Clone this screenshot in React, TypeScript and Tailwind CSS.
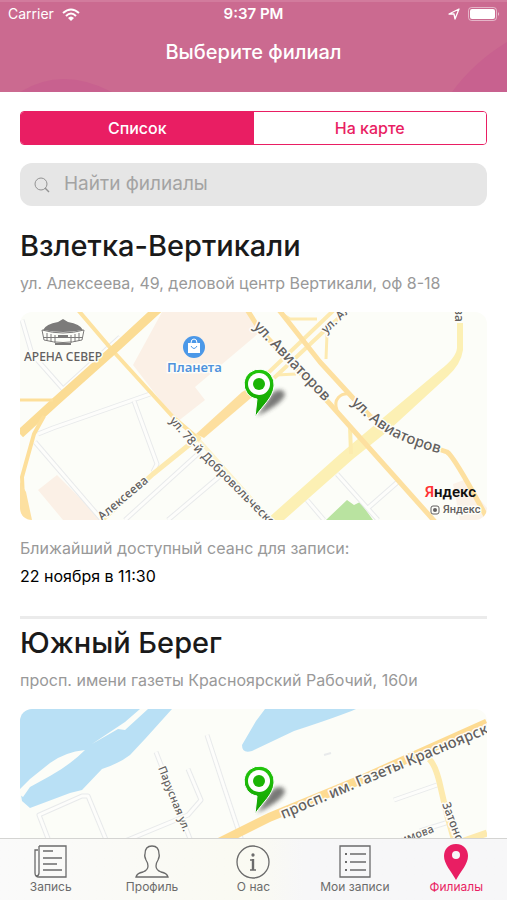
import type { ReactNode } from 'react';

const grey = '#e8eaeb';

const Pin = () => (
  <g>
    <defs>
      <filter id="soft" x="-50%" y="-50%" width="200%" height="200%">
        <feGaussianBlur stdDeviation="2" />
      </filter>
      <linearGradient id="pin" x1="0" y1="0" x2="0" y2="1">
        <stop offset="0" stopColor="#22c60c" />
        <stop offset="1" stopColor="#12a000" />
      </linearGradient>
    </defs>
    <path d="M237 104 L250 84 C256 74 268 78 264 85 Q258 94 237 104Z" fill="#333" opacity=".65" filter="url(#soft)" />
    <path
      d="M235 105 L237 87 A15 15 0 1 1 254 74 C253 86 243 93 235 105Z"
      fill="url(#pin)"
      stroke="#fff"
      strokeWidth="1"
    />
    <circle cx="239" cy="72" r="11" fill="#fff" />
    <circle cx="239" cy="72" r="6" fill="#1bb406" />
  </g>
);

const MapFrame = ({ label, children }: { label: string; children: ReactNode }) => (
  <svg
    viewBox="0 0 467 208"
    preserveAspectRatio="xMidYMid slice"
    role="img"
    aria-label={label}
    className="mt-[17px] block h-52 w-full rounded-xl bg-[#fcfdf8] font-['Noto_Sans',sans-serif] font-medium"
  >
    {children}
    <Pin />
  </svg>
);

const Lane = ({ d }: { d: string }) => (
  <g fill="none" strokeLinejoin="round">
    <path d={d} stroke={grey} strokeWidth="5" />
    <path d={d} stroke="#fdfdfb" strokeWidth="3" />
  </g>
);

const street = {
  fill: '#62605f',
  stroke: '#fdfdf8',
  strokeWidth: 3,
  strokeLinejoin: 'round' as const,
  paintOrder: 'stroke',
};

const VzletkaMap = () => (
  <MapFrame label="Взлетка-Вертикали на карте">
    <path d="M142 0 L113 53 L157 110 L185 88 L175 75 L240 20 L228 0Z" fill="#fbf0e6" />
    <path d="M37 163 L18 178 L43 208 L82 208Z" fill="#fbf0e6" />
    <path d="M433 172 L444 168 L467 196 L467 208 L440 208Z" fill="#fbf2e8" />
    <path d="M306 208 L327 188 L334 193 L340 190 L353 208Z" fill="#b9e3a0" />

    <Lane d="M2 8 L12 42 L43 77 L100 25" />
    <Lane d="M18 122 L33 116 L133 81" />
    <Lane d="M114 89 L137 152 L133 160" />
    <Lane d="M15 130 L82 208" />
    <Lane d="M105 208 L180 140" />
    <Lane d="M148 208 L200 164" />
    <Lane d="M317 162 L358 208 M348 196 L380 168" />
    <Lane d="M287 188 L304 208" />

    <path
      d="M246 208 L320 142 L420 58 Q436 46 437 36 L437 11 H443 L443 38 Q441 52 428 64 L368 119 L333 147 L264 208Z"
      fill="#fcf0b4"
    />
    <g fill="none" strokeLinejoin="round">
      <path d="M330 114 L331 142" stroke="#fcebae" strokeWidth="4" />
      <path d="M247 62 L314 -2 M254 66 L302 21 L330 -4" stroke="#fdeab0" strokeWidth="4" />
      <path d="M256 63 L276 62 M262 2 L270 7 L297 7 M307 22 L306 47" stroke="#fdeab0" strokeWidth="3" />
      <path d="M177 126 L250 208" stroke="#fdf3cf" strokeWidth="4" />
      <path d="M58 -2 L93 39 L153 105 L180 128" stroke="#fde2a0" strokeWidth="4" />
      <path d="M82 208 L133 162 L180 124" stroke="#fdeab0" strokeWidth="5" />
      <path d="M0 122 L35 90 L100 32 L139 -4" stroke="#fbdc94" strokeWidth="9" />
      <path d="M0 88 L33 88" stroke="#fddf9a" strokeWidth="3" />
      <path d="M4 210 L2 165 L14 122 L24 104" stroke="#fddf9a" strokeWidth="4" />
      <path d="M226 -4 L240 18 L310 92 L417 212" stroke="#fde0a0" strokeWidth="5" />
      <path d="M259 -2 L300 50 L333 86 L350 104 L375 122 L427 140 Q434 144 467 206" stroke="#fde0a0" strokeWidth="5" />
      <path d="M331 82 C320 80 313 88 317 98" stroke="#fde0a0" strokeWidth="3" />
    </g>
    <path d="M0 170 L6 180 L12 208 L0 208Z" fill="#fde0a0" />
    <path d="M176 122 L222 80 L231 75 L238 80 L184 126Z" fill="#fddf9f" />

    <g fill="#7c7b7a">
      <path d="M23 18 Q26 12 38 10 L43 7 L48 10 Q60 12 63 18 Q43 22 23 18Z" />
      <path
        d="M22 18 Q43 24 64 18 L62 28 Q43 33 24 28Z M27 21 V29 M31 22 V30 M35 23 V31 M51 23 V31 M55 22 V30 M59 21 V29"
        fill="none"
        stroke="#7c7b7a"
        strokeWidth="1"
      />
      <path d="M38 23 H48 V25 H38Z M24 25 H62 V26 H24Z M35 31 H51 V33 H35Z" />
    </g>
    <text x="4" y="49" fontSize="12" {...street}>АРЕНА СЕВЕР</text>

    <circle cx="174" cy="35" r="11" fill="#4b98e8" />
    <path d="M168 31 H180 V41 H168Z" fill="#fff" />
    <path d="M171 31 Q171 27 174 27 Q177 27 177 31" fill="none" stroke="#fff" strokeWidth="1" />
    <path d="M171 34 Q174 39 177 34" fill="none" stroke="#4b98e8" strokeWidth="1" />
    <text x="147" y="60" fontSize="13" fontWeight="600" {...street} fill="#4f93dd">Планета</text>

    <defs>
      <path id="aviatorov-a" d="M233 15 L320 106" />
      <path id="aviatorov-b" d="M331 91 Q358 120 388 131 Q408 139 450 150" />
      <path id="dobrovolchesky" d="M149 109 L174 138 L260 224" />
      <path id="alekseeva" d="M82 209 L145 156" />
      <path id="aviatorov-c" d="M306 22 L350 -19" />
    </defs>
    <g fontSize="15" {...street}>
      <text><textPath href="#aviatorov-a">ул. Авиаторов</textPath></text>
      <text><textPath href="#aviatorov-b">ул. Авиаторов</textPath></text>
    </g>
    <g fontSize="12" {...street}>
      <text><textPath href="#dobrovolchesky">ул. 78-й Добровольческой</textPath></text>
      <text><textPath href="#alekseeva">Алексеева</textPath></text>
      <text><textPath href="#aviatorov-c">ул. Але</textPath></text>
      <text transform="translate(435 -4) rotate(90)">ва</text>
    </g>

    <g className="font-['Roboto',sans-serif]">
      <text x="405" y="185" fontSize="15" fontWeight="600" fill="#111">
        <tspan fill="#f33">Я</tspan>ндекс
      </text>
      <text x="423" y="201" fontSize="11" {...street}>Яндекс</text>
      <rect x="411" y="194" width="8" height="8" rx="2" fill="none" stroke="#62605f" />
      <circle cx="415" cy="198" r="2" fill="#62605f" />
    </g>
  </MapFrame>
);

const BeregMap = () => (
  <MapFrame label="Южный Берег на карте">
    <path
      d="M0 0 H152 L125 30 L110 46 Q100 54 82 60 L62 81 L50 84 L10 99 L2 92 L0 80Z M245 0 H336 Q320 7 274 22 L232 42 Q222 45 222 36 L236 12Z"
      fill="#b9e0f5"
    />
    <path
      d="M0 86 V80 L10 70 L30 54 Q45 43 65 41 Q50 56 30 67 L10 78 L3 88Z M72 35 L105 13 L120 0 H128 L105 21 L98 20Z"
      fill="#fcfdf8"
    />
    <Lane d="M32 140 L19 106 L62 87 L68 87 L94 150" />
    <Lane d="M136 43 L174 140" />
    <Lane d="M168 60 L181 91 L168 106 L76 144" />
    <Lane d="M187 26 L204 78 L222 132" />
    <Lane d="M374 91 L417 76" />
    <Lane d="M400 122 L432 112" />
    <path d="M304 46 L311 44" stroke={grey} strokeWidth="2" />
    <g fill="none">
      <path d="M190 138 L250 108 L340 71 L467 14" stroke="#fddb92" strokeWidth="9" />
      <path d="M409 50 Q416 56 421 80 L427 106 L436 138" stroke="#fdeaae" strokeWidth="6" />
      <path d="M444 132 L467 124" stroke="#fdeaae" strokeWidth="7" />
    </g>
    <defs>
      <path id="gazety" d="M263 110 L346 75 L500 11" />
      <path id="parusnaya" d="M138 59 L175 152" />
      <path id="zatonskaya" d="M422 95 L450 170" />
      <path id="simova" d="M382 135 L430 117" />
    </defs>
    <g {...street}>
      <text fontSize="15"><textPath href="#gazety">просп. им. Газеты Красноярский</textPath></text>
      <text fontSize="11"><textPath href="#parusnaya">Парусная ул.</textPath></text>
      <text fontSize="12"><textPath href="#zatonskaya">Затонская</textPath></text>
      <text fontSize="11"><textPath href="#simova">имова</textPath></text>
    </g>
  </MapFrame>
);

const branches = [
  {
    name: 'Взлетка-Вертикали',
    address: 'ул. Алексеева, 49, деловой центр Вертикали, оф 8-18',
    next: '22 ноября в 11:30',
    map: <VzletkaMap />,
  },
  {
    name: 'Южный Берег',
    address: 'просп. имени газеты Красноярский Рабочий, 160и',
    next: '22 ноября в 12:00',
    map: <BeregMap />,
  },
];

const tabs = [
  {
    title: 'Запись',
    icon: (
      <path d="M6 3 H33 V34 H6 Q2 34 2 30 V7 H5 M6 3 V30 Q6 33 3 33 M10 8 H20 M10 15 H29 M10 21 H24 M10 27 H29" />
    ),
  },
  {
    title: 'Профиль',
    icon: (
      <path d="M18 3 Q11 3 11 11 Q10 13 12 17 Q14 20 14 23 Q14 27 9 29 Q3 30 2 34 H34 Q33 30 27 29 Q22 27 22 23 Q22 20 24 17 Q26 13 25 11 Q25 3 18 3Z" />
    ),
  },
  {
    title: 'О нас',
    icon: (
      <>
        <circle cx="18" cy="19" r="16" />
        <circle cx="18" cy="12" r="1" fill="currentColor" />
        <path d="M15 17 H18 M15 27 H21" />
        <path d="M18 16 V27" strokeWidth="2.4" />
      </>
    ),
  },
  {
    title: 'Мои записи',
    icon: (
      <>
        <path d="M3 3 H33 V34 H3Z M13 11 H29 M13 19 H29 M13 27 H29" />
        <path d="M8 11 H10 M8 19 H10 M8 27 H10" strokeWidth="2" />
      </>
    ),
  },
  {
    title: 'Филиалы',
    active: true,
    icon: (
      <path
        d="M18 1 C10 1 6 7 6 13 C6 21 13 28 18 37 C23 28 30 21 30 13 C30 7 26 1 18 1Z M18 8 A4 4 0 1 1 18 16 A4 4 0 1 1 18 8Z"
        fill="currentColor"
        fillRule="evenodd"
        stroke="none"
      />
    ),
  },
];

const Header = () => (
  <header className="relative h-[92px] shrink-0 overflow-hidden bg-[#cb6a90] text-white">
    <svg viewBox="0 0 507 92" preserveAspectRatio="none" className="absolute inset-0 size-full" aria-hidden="true">
      <path d="M20 92 Q62 66 112 92Z M452 92 Q474 62 507 42 V92Z" fill="#c8618f" />
      <path d="M0 0 H507 V2 H0Z" fill="#d27b9d" />
    </svg>
    <div className="relative grid grid-cols-3 items-center px-2 pt-1 text-sm leading-5">
      <span className="flex items-center gap-2">
        Carrier
        <svg viewBox="0 0 18 13" className="h-[13px] w-[18px]" fill="none" stroke="currentColor" strokeWidth="2">
          <path d="M1 5 Q9 -2 17 5 M4 8 Q9 3 14 8" />
          <path d="M6 10 Q9 7 12 10 L9 13Z" fill="currentColor" stroke="none" />
        </svg>
      </span>
      <span className="text-center text-[15px] leading-5 font-semibold">9:37 PM</span>
      <span className="flex items-center justify-end gap-2">
        <svg viewBox="0 0 12 12" className="size-3" fill="none" stroke="currentColor" strokeWidth="1.3" strokeLinejoin="round">
          <path d="M1 6 L11 1 L7 11 L6 6Z" />
        </svg>
        <svg viewBox="0 0 31 14" className="h-[14px] w-[31px]">
          <rect x=".5" y=".5" width="28" height="13" rx="3" fill="none" stroke="#fff" opacity=".5" />
          <rect x="2" y="2" width="25" height="10" rx="2" fill="#fff" />
          <path d="M30 5 Q32 7 30 9Z" fill="#fff" opacity=".6" />
        </svg>
      </span>
    </div>
    <h1 className="relative mt-[14px] text-center text-xl font-medium">Выберите филиал</h1>
  </header>
);

const App = () => {
  return (
    <div className="flex h-screen flex-col bg-white font-['Inter',sans-serif]">
      <Header />
      <main className="min-h-0 flex-1 overflow-y-auto px-5 [scrollbar-width:none]">
        <div className="mt-[19px] grid h-[34px] grid-cols-2 overflow-hidden rounded border border-[#e91e63] text-base font-medium">
          <button type="button" className="bg-[#e91e63] text-white">Список</button>
          <button type="button" className="bg-white text-[#e91e63]">На карте</button>
        </div>

        <label className="mt-[18px] flex h-[43px] items-center gap-3 rounded-xl bg-[#e6e6e6] px-3 text-[#a3a3a3]">
          <svg viewBox="0 0 20 20" className="size-5" fill="none" stroke="#929292" aria-hidden="true">
            <circle cx="9" cy="9" r="6" />
            <path d="M13 13 L17 17" strokeWidth="1.5" />
          </svg>
          <input
            type="search"
            aria-label="Найти филиалы"
            placeholder="Найти филиалы"
            className="min-w-0 flex-1 bg-transparent text-[19px] outline-none placeholder:text-[#a3a3a3]"
          />
        </label>

        {branches.map((branch, index) => (
          <section key={branch.name} className={index === 0 ? 'pt-5' : 'mt-7 border-t-[3px] border-[#ebebeb] pt-1'}>
            <h2 className="text-[29px] leading-10 font-medium text-[#1a1a1a]">{branch.name}</h2>
            <p className="mt-[5px] text-base text-[#999]">{branch.address}</p>
            {branch.map}
            <p className="mt-4 text-base text-[#999]">Ближайший доступный сеанс для записи:</p>
            <p className="mt-1 text-base text-black">{branch.next}</p>
          </section>
        ))}
      </main>

      <nav className="grid h-[62px] shrink-0 grid-cols-5 border-t border-[#d4d4d2] bg-linear-to-r from-[#fafafa] via-[#fafaf2] to-[#f7f7f8] to-60%">
        {tabs.map((tab) => (
          <a
            key={tab.title}
            href="#"
            className={
              tab.active
                ? 'flex flex-col items-center pt-1 text-[#e91e63]'
                : 'flex flex-col items-center pt-1 text-[#6b6b6b]'
            }
          >
            <svg viewBox="0 0 36 38" className="h-[38px] w-9" fill="none" stroke="currentColor" strokeWidth="1.3">
              {tab.icon}
            </svg>
            <span className="text-xs leading-3">{tab.title}</span>
          </a>
        ))}
      </nav>
    </div>
  );
};

export default App;
